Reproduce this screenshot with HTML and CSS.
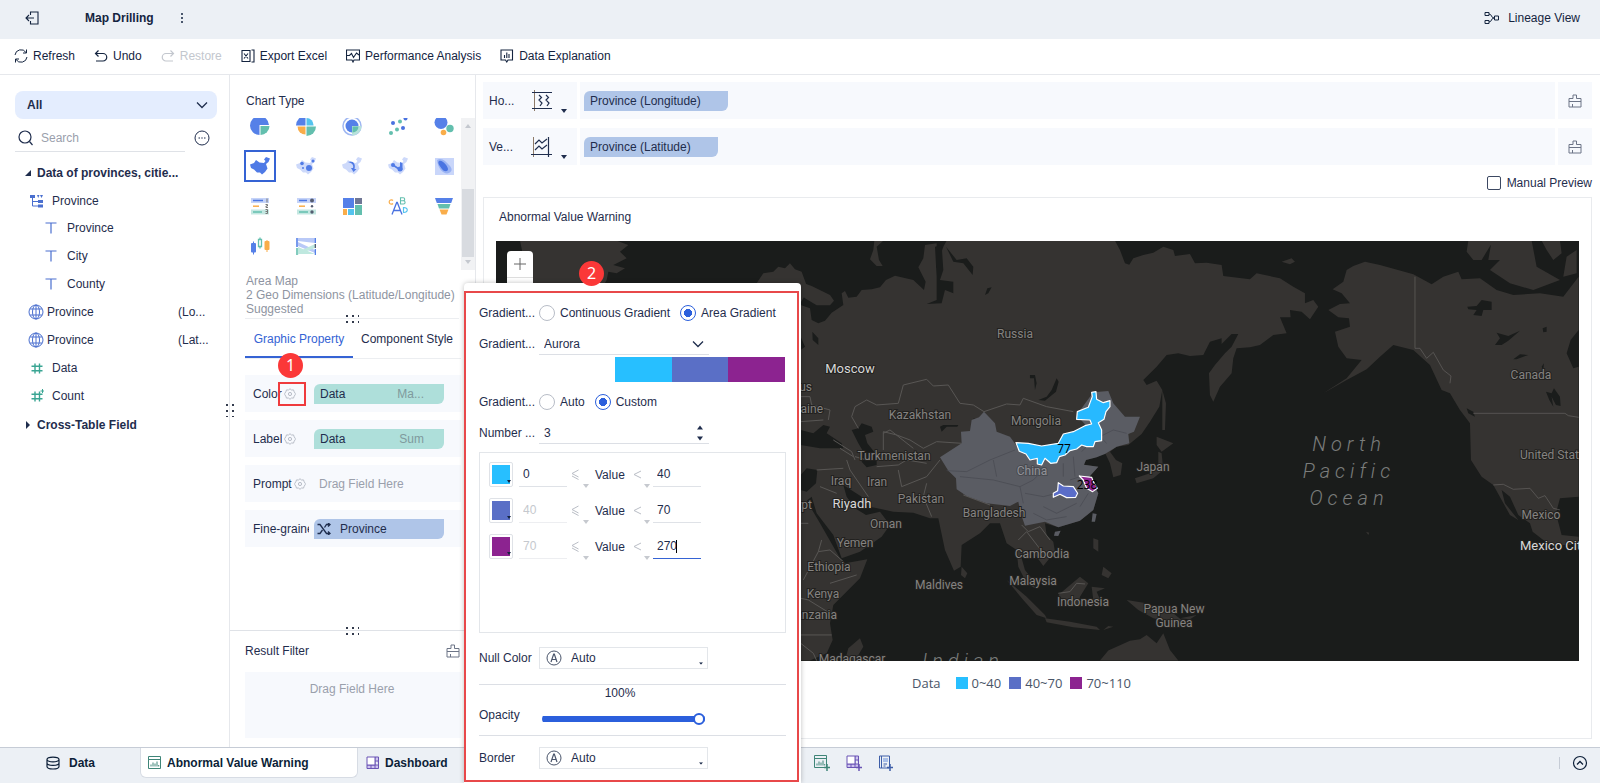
FILE: index.html
```
<!DOCTYPE html>
<html lang="en">
<head>
<meta charset="utf-8">
<title>Map Drilling</title>
<link rel="stylesheet" href="styles.css">
</head>
<body>
<svg class="defs" aria-hidden="true">
  <symbol id="gear" viewBox="0 0 12 12"><path d="M6 .700 7.500 2l2-.1.700 1.900L11.300 5.500v1L10.200 8.200l-.7 1.900-2-.1L6 11.300 4.500 10l-2 .1-.7-1.900L.700 6.500v-1l1.100-1.700.7-1.900 2 .1z" fill="none" stroke="currentColor"/><circle cx="6" cy="6" r="1.600" fill="none" stroke="currentColor"/></symbol>
  <symbol id="broom" viewBox="0 0 14 14"><path d="M5 4.500V1h3.500v3.500H13V13H1V4.500zM1 7.500h12M4.500 13v-3" fill="none" stroke="currentColor"/></symbol>
  <symbol id="china" viewBox="0 0 20 18"><path d="M0 7.500 4 6 6 3l3.500 2.500 4.500.5 1.500-2L14 2.500 16 0l4 1.500-1.500 3.500L16 7l1.500 4.500L15 15l-3 2.500-2-2H7L4 12.500 1 11z"/></symbol>
  <symbol id="globe" viewBox="0 0 16 16"><g fill="none" stroke="currentColor"><circle cx="8" cy="8" r="7"/><ellipse cx="8" cy="8" rx="3.500" ry="7"/><path d="M8 1v14M1.800 5h12.400M1.800 11h12.400"/></g></symbol>
  <symbol id="tee" viewBox="0 0 12 12"><path d="M.500 1h11M6 1v10.500" fill="none" stroke="currentColor" stroke-width="1.200"/></symbol>
  <symbol id="hash" viewBox="0 0 14 14"><path d="M5 2.500v10M9.500 2.500v10M1.500 5.200h11M1.500 9.700h11" fill="none" stroke="currentColor" stroke-width="1.400"/></symbol>
  <symbol id="chev" viewBox="0 0 12 8"><path d="M1 1.500 6 6.500l5-5" fill="none" stroke="currentColor" stroke-width="1.300"/></symbol>
  <symbol id="auto" viewBox="0 0 16 16"><g fill="none" stroke="currentColor"><circle cx="8" cy="8" r="7"/><path d="M5 12 7.700 4h.6L11 12M6 9.500h4" stroke-width="1.200"/></g></symbol>
  <symbol id="chart" viewBox="0 0 14 14"><path d="M.5.5h12v12H.500zM.500 3.500h12M3 8.500v2M5 6.500v4M7 7.500v3M9 5.500v5M10.700 9v1.500" fill="none" stroke="currentColor"/></symbol>
  <symbol id="dash" viewBox="0 0 14 14"><path d="M9 1h3.500v11.500H1V9h11.500M9 1v11.500M9 5h3.500" fill="#cfc4f0" stroke="currentColor"/><path d="M1 1h8v8H1z" fill="#fff" stroke="currentColor"/><path d="M5 9v3.500" stroke="currentColor"/></symbol>
  <symbol id="book" viewBox="0 0 14 14"><path d="M1.500 1h10v12h-10zM3.500 1v12" fill="none" stroke="currentColor"/><path d="M5 3h5v4H5z" fill="#a9bfe8"/><path d="M5.500 9H9M5.500 11h2" stroke="currentColor"/></symbol>
  <symbol id="tri" viewBox="0 0 6 4"><path d="M0 0h6L3 4z" fill="currentColor"/></symbol>
  <symbol id="lte" viewBox="0 0 8 12"><path d="M7.500 1 1 4.500 7.500 8M1 7l6.500 3.500" fill="none" stroke="currentColor"/></symbol>
  <symbol id="lt" viewBox="0 0 8 12"><path d="M8 2 1 5.500 8 9" fill="none" stroke="currentColor"/></symbol>
</svg>

<header class="top">
  <button class="back" aria-label="Exit"><svg width="15" height="14" viewBox="0 0 15 14"><path d="M5.500 4V1h7.500v12H5.500v-3M1 7h8M4 4 1 7l3 3" fill="none" stroke="currentColor" stroke-width="1.100"/></svg></button>
  <h1>Map Drilling</h1>
  <button class="more" aria-label="More"><svg width="4" height="12" viewBox="0 0 4 12" fill="currentColor"><circle cx="2" cy="2" r="1"/><circle cx="2" cy="6" r="1"/><circle cx="2" cy="10" r="1"/></svg></button>
  <button class="lineage"><svg width="16" height="14" viewBox="0 0 16 14"><path d="M1 1.500h4v3H1zM1 9.500h4v3H1zM5 3c3 0 2 4 5 4M5 11c3 0 2-4 5-4M10.500 5h4v4h-4z" fill="none" stroke="currentColor"/></svg>Lineage View</button>
</header>

<nav class="tools">
  <button><svg width="14" height="14" viewBox="0 0 14 14"><path d="M1 6a6 6 0 0 1 11-2.500M13 8a6 6 0 0 1-11 2.500M12.500.500v3.500H9M1.500 13.500V10H5" fill="none" stroke="currentColor"/></svg>Refresh</button>
  <button><svg width="14" height="14" viewBox="0 0 14 14"><path d="M4.500 1.500 1.500 4.500l3 3M1.500 4.500H9a3.500 3.500 0 0 1 0 7.500H2" fill="none" stroke="currentColor" stroke-width="1.200"/></svg>Undo</button>
  <button disabled><svg width="14" height="14" viewBox="0 0 14 14"><path d="M9.500 1.500l3 3-3 3M12.500 4.500H5A3.500 3.500 0 0 0 5 12h7" fill="none" stroke="currentColor" stroke-width="1.200"/></svg>Restore</button>
  <button><svg width="14" height="14" viewBox="0 0 14 14"><path d="M1 1.500h8v11H1zM10.500 1H13v12h-2.500M3 4.500l4 5M7 4.500l-4 5" fill="none" stroke="currentColor" stroke-width="1.100"/></svg>Export Excel</button>
  <button><svg width="14" height="14" viewBox="0 0 14 14"><path d="M.500 1h13v10H8l-1 2-1-2H.500zM1 6.500h2.500l2-2 2 4 3-4.500L13 6" fill="none" stroke="currentColor" stroke-width="1.100"/></svg>Performance Analysis</button>
  <button><svg width="14" height="14" viewBox="0 0 14 14"><path d="M1 1h11.500v10H8l-1.200 2L5.500 11H1zM4.500 9V6M6.800 9V3.500M9 9V5" fill="none" stroke="currentColor" stroke-width="1.100"/></svg>Data Explanation</button>
</nav>

<main class="work">
  <aside class="fields">
    <button class="all">All<svg width="12" height="8"><use href="#chev"/></svg></button>
    <div class="find">
      <label class="search"><svg width="16" height="16" viewBox="0 0 16 16"><circle cx="7" cy="7" r="6" fill="none" stroke="currentColor" stroke-width="1.200"/><path d="m11.500 11.500 3 3.500" stroke="currentColor" stroke-width="1.200"/></svg><input type="text" placeholder="Search" aria-label="Search"></label>
      <button aria-label="Options"><svg width="16" height="16" viewBox="0 0 16 16"><circle cx="8" cy="8" r="7" fill="none" stroke="currentColor"/><path d="M4.500 7.500H6v1H4.500zM7.300 7.500h1.400v1H7.300zM10 7.500h1.500v1H10z" fill="currentColor"/></svg></button>
    </div>
    <ul class="tree">
      <li class="group"><svg width="6" height="6" viewBox="0 0 6 6"><path d="M6 0v6H0z" fill="currentColor"/></svg>Data of provinces, citie...</li>
      <li><svg class="blue" width="14" height="14" viewBox="0 0 14 14"><path d="M0 1h5v3H0zM7 1h2.500L8.200 4zM10 1h3l-1.500 3zM8 6h5v3H8zM8 10.500h5v3H8z" fill="currentColor"/><path d="M2.500 4v8H8M2.500 7.500H8" fill="none" stroke="currentColor"/></svg>Province</li>
      <li class="deep"><svg class="blue" width="12" height="12"><use href="#tee"/></svg>Province</li>
      <li class="deep"><svg class="blue" width="12" height="12"><use href="#tee"/></svg>City</li>
      <li class="deep"><svg class="blue" width="12" height="12"><use href="#tee"/></svg>County</li>
      <li class="geo"><svg class="blue" width="16" height="16"><use href="#globe"/></svg>Province<span>(Lo...</span></li>
      <li class="geo"><svg class="blue" width="16" height="16"><use href="#globe"/></svg>Province<span>(Lat...</span></li>
      <li><svg class="teal" width="14" height="14"><use href="#hash"/></svg>Data</li>
      <li><svg class="teal" width="14" height="14"><use href="#hash"/><path d="M12.500 0v4M10.500 2h3.500" stroke="currentColor"/></svg>Count</li>
      <li class="group"><svg width="6" height="8" viewBox="0 0 6 8"><path d="M1 0l4 4-4 4z" fill="currentColor"/></svg>Cross-Table Field</li>
    </ul>
    <i class="grip side"></i>
  </aside>

  <section class="design">
    <h2>Chart Type</h2>
    <div class="types">
      <div class="grid">
        <button aria-label="Pie"><svg width="20" height="20" viewBox="0 0 20 20"><path d="M9.500 19A9.500 9.500 0 1 1 19 9H9.500z" fill="#5580e8"/><path d="M10.500 10H19.500A9 9 0 0 1 10.500 19z" fill="#63bfae"/></svg></button>
        <button aria-label="Rose"><svg width="20" height="20" viewBox="0 0 20 20"><path d="M9.500 9.500V0A9.500 9.500 0 0 0 0 9.500z" fill="#5580e8"/><path d="M10.500 9.500V2a7 7 0 0 1 7 7.500z" fill="#54c3ee"/><path d="M9.500 10.500v8a8 8 0 0 1-8-8z" fill="#f9ad4a"/><path d="M10.500 10.500H20a9.500 9.500 0 0 1-9.500 9.500z" fill="#63bfae"/></svg></button>
        <button aria-label="Ring"><svg width="20" height="20" viewBox="0 0 20 20"><circle cx="10" cy="10" r="9" fill="none" stroke="#9fb7f2" stroke-width="1.500"/><circle cx="10" cy="10" r="6.500" fill="#5580e8"/><path d="M10 10h9.500a9.500 9.500 0 0 1-9.500 9.500z" fill="#b7e2da"/><path d="M10.500 10.500h6a6 6 0 0 1-6 6z" fill="#63bfae"/></svg></button>
        <button aria-label="Scatter"><svg width="20" height="20" viewBox="0 0 20 20"><g fill="#63bfae"><circle cx="3" cy="17" r="2"/><circle cx="9" cy="13.500" r="2"/><circle cx="12" cy="5.500" r="2"/></g><g fill="#4a72e0"><circle cx="5" cy="7" r="2"/><circle cx="15" cy="12" r="2"/><circle cx="17.500" cy="2.500" r="2"/></g></svg></button>
        <button aria-label="Bubble"><svg width="20" height="20" viewBox="0 0 20 20"><circle cx="7" cy="6.500" r="6.500" fill="#5580e8"/><circle cx="16" cy="12.500" r="3.700" fill="#63bfae"/><circle cx="9.500" cy="16.500" r="2.800" fill="#f9ad4a"/></svg></button>
        <button class="on" aria-label="Area Map"><svg width="20" height="18" fill="#4f7ae6"><use href="#china"/></svg></button>
        <button aria-label="Point Map"><svg width="20" height="18"><use href="#china" fill="#cdd9fa"/><g fill="#4f7ae6"><circle cx="6" cy="6.500" r="1.800"/><circle cx="13" cy="11" r="3"/><circle cx="17" cy="4" r="1.500"/><circle cx="7" cy="11" r="1"/></g></svg></button>
        <button aria-label="Flow Map"><svg width="20" height="18"><use href="#china" fill="#cdd9fa"/><path d="M6 5c5-2 8 2 6.500 7l2 0-3 3-2.500-4h2c1-3-1-5-5-6z" fill="#4f7ae6"/></svg></button>
        <button aria-label="Heat Map"><svg width="20" height="18"><use href="#china" fill="#cdd9fa"/><g fill="#4f7ae6"><circle cx="5" cy="8" r="2"/><circle cx="12" cy="12" r="2.500"/><path d="m5 7 6 4-1 1.500-5-3.500zM12 5l2.500 1v7H12z"/></g></svg></button>
        <button aria-label="Contour Map"><svg width="20" height="18" viewBox="0 0 20 18"><path d="M1 1h19v17H1z" fill="#c9d6fa"/><path d="M3 3c5-3 9 2 12 5s4 6 0 8S4 13 3 3z" fill="#9ab3f3"/><path d="M5 4c3-2 9 5 9 8s-4 3-6 0-5-6-3-8z" fill="#4a74e2"/></svg></button>
        <button aria-label="Group Table"><svg width="20" height="18" viewBox="0 0 20 18"><path d="M1 1h18v5H1z" fill="#c5d3f8"/><path d="M1 12.500h18v5H1z" fill="#c4e7e1"/><path d="M3 3.500h10" stroke="#4a74e2" stroke-width="1.500"/><path d="M3 9.200h6" stroke="#f9ad4a" stroke-width="1.500"/><path d="M3 15h9" stroke="#63bfae" stroke-width="1.500"/><path d="M17 1.500v4M15.500 7.500h2v1.500h-1.500v1.500h2M15.500 12.500h2v4h-2m0-2h2" fill="none" stroke="#777"/></svg></button>
        <button aria-label="KPI Card"><svg width="20" height="18" viewBox="0 0 20 18"><path d="M1 1h19v5H1z" fill="#c5d3f8"/><path d="M1 12.500h19v5H1z" fill="#c4e7e1"/><path d="M3 3.500h8" stroke="#4a74e2" stroke-width="1.500"/><path d="M3 9.200h6" stroke="#f9ad4a" stroke-width="1.500"/><path d="M3 15h9" stroke="#63bfae" stroke-width="1.500"/><g fill="#555c70"><circle cx="16" cy="3.500" r="2"/><circle cx="16" cy="9.200" r="1.200"/><circle cx="16" cy="15" r="1.700"/></g></svg></button>
        <button aria-label="Treemap"><svg width="20" height="18" viewBox="0 0 20 18"><path d="M1 1h11v10H1z" fill="#5580e8"/><path d="M13 1h7v6h-7z" fill="#6f7694"/><path d="M13 8h7v10h-7z" fill="#63bfae"/><path d="M1 12h4v6H1z" fill="#f9ad4a"/><path d="M6 12h6v6H6z" fill="#54c3ee"/></svg></button>
        <button aria-label="Word Cloud"><svg width="20" height="18" viewBox="0 0 20 18" fill="none"><path d="M4 17.500 8.700 5.500h.6L14 17.500M5.500 13.500h7" stroke="#4a72e0" stroke-width="1.300"/><path d="M5 3.500a2.200 2.200 0 1 0 0 3" stroke="#f9ad4a" stroke-width="1.200"/><path d="M12.500.800V7h3a1.500 1.500 0 0 0 0-3.200h-3 2.700a1.500 1.500 0 0 0 0-3z" stroke="#63bfae" stroke-width="1.100"/><path d="M15.500 10.500v5c5 .3 5-5.300 0-5z" stroke="#54c3ee" stroke-width="1.200"/></svg></button>
        <button aria-label="Funnel"><svg width="20" height="18" viewBox="0 0 20 18"><path d="M1 1h18l-1.800 5H2.800z" fill="#5580e8"/><path d="M3.500 7h13l-1.500 4.500H5z" fill="#63bfae"/><path d="M5.500 12.500h9l-2 5h-5z" fill="#f9ad4a"/></svg></button>
        <button aria-label="Box Plot"><svg width="20" height="18" viewBox="0 0 20 18"><rect x="1" y="6" width="5" height="9.500" rx="1" fill="#5580e8"/><path d="M3.500 4.500v13" stroke="#5580e8"/><path d="M8.500 2.500h3v7h-3zM10 .5v2M10 9.500v2" fill="none" stroke="#63bfae" stroke-width="1.300"/><rect x="14.500" y="4" width="5" height="9" rx="1" fill="#f9ad4a"/><path d="M17 3v12" stroke="#f9ad4a"/></svg></button>
        <button aria-label="Sankey"><svg width="20" height="18" viewBox="0 0 20 18"><path d="M2 1h17v5L2 4zM2 5l17 8v3L2 9z" fill="#b9c9f7"/><path d="M2 15l17-8v4L2 17.500zM2 10l17 7H2z" fill="#bfe8df"/><path d="M1 1v9M19.500 1v5M19.500 12v6" stroke="#5580e8" stroke-width="1.600"/><path d="M1 11v7" stroke="#63bfae" stroke-width="1.600"/><path d="M19.500 7v4" stroke="#555c70" stroke-width="1.600"/></svg></button>
      </div>
      <div class="bar"><svg width="6" height="4"><path d="M0 4h6L3 0z" fill="#c4c8cf"/></svg><i></i><svg width="6" height="4"><path d="M0 0h6L3 4z" fill="#c4c8cf"/></svg></div>
    </div>
    <p class="hint">Area Map<br>2 Geo Dimensions (Latitude/Longitude)<br>Suggested</p>
    <div class="split"><i class="grip"></i></div>
    <div class="tabs"><button class="on">Graphic Property</button><button>Component Style</button></div>
    <div class="props">
      <div class="prop"><span>Color</span><svg width="12" height="12"><use href="#gear"/></svg><i class="mark"></i><b class="badge one">1</b><div class="chip green">Data<em>Ma...</em></div></div>
      <div class="prop"><span>Label</span><svg width="12" height="12"><use href="#gear"/></svg><div class="chip green">Data<em>Sum</em></div></div>
      <div class="prop"><span>Prompt</span><svg width="12" height="12"><use href="#gear"/></svg><div class="drop">Drag Field Here</div></div>
      <div class="prop"><span>Fine-grained</span><div class="chip"><svg width="14" height="12" viewBox="0 0 14 12"><path d="M.5 1.500H3l6.500 9H13M.500 10.500H3l2.500-3.500M7.500 4.500l2-3H13M11 0l2 1.500L11 3.500M11 8.500l2 2-2 1.500" fill="none" stroke="currentColor" stroke-width="1.300"/></svg>Province</div></div>
    </div>
    <div class="split wide"><i class="grip"></i></div>
    <div class="filter">
      <div class="fhead">Result Filter<button aria-label="Clear filter"><svg width="14" height="14"><use href="#broom"/></svg></button></div>
      <div class="fdrop">Drag Field Here</div>
    </div>
  </section>

  <section class="canvas">
    <div class="shelf">
      <div class="axis">Ho...<svg width="22" height="22" viewBox="0 0 22 22"><path d="M3.500 0v21" stroke="#8d7a68"/><path d="M1 2.500h20M1 18.500h20M8 5l2.500 2.500L8 10l3 3-2 3M15 5l2.500 2.500L15 10l3 3-2 3" fill="none" stroke="currentColor" stroke-width="1.200"/></svg><svg class="down" width="6" height="4"><use href="#tri"/></svg></div>
      <div class="slot"><div class="chip">Province (Longitude)</div></div>
      <button aria-label="Clear horizontal axis"><svg width="14" height="14"><use href="#broom"/></svg></button>
    </div>
    <div class="shelf">
      <div class="axis">Ve...<svg width="22" height="22" viewBox="0 0 22 22"><path d="M3.500 1v20" stroke="#8d7a68"/><path d="M1 18.500h21M18.500 1v20M5 8l4-4 3 3 5-4M5 14l4-4 3 3 5-4" fill="none" stroke="currentColor" stroke-width="1.200"/></svg><svg class="down" width="6" height="4"><use href="#tri"/></svg></div>
      <div class="slot"><div class="chip">Province (Latitude)</div></div>
      <button aria-label="Clear vertical axis"><svg width="14" height="14"><use href="#broom"/></svg></button>
    </div>
    <label class="preview"><input type="checkbox">Manual Preview</label>
    <div class="card">
      <h2>Abnormal Value Warning</h2>
      <div class="map">
        <svg class="world" viewBox="496 241 1083 420" preserveAspectRatio="xMidYMid slice" role="img" aria-label="World map">
          <g fill="#353331">
            <g transform="translate(480 70) scale(.3333)">
              <path d="M120 512 130 560 145 580 150 900 200 850 260 800 330 720 380 630 385 605 410 610 435 595 400 585 440 565 420 545 445 525 410 512zM830 640 850 610 880 605 895 590 915 595 930 580 945 598 965 605 985 660 900 800 830 760z"/>
            </g>
            <g transform="translate(780 230) scale(.3333)">
              <path d="M283 32 310 32 290 50 297 90 308 108 290 108 270 88 280 60zM60 155 95 168 150 195 162 212 150 226 110 226 75 205 60 190z"/>
              <path d="M0 200 62 225 90 235 95 270 115 280 135 272 155 248 190 225 185 190 195 183 205 203 230 200 245 180 275 178 300 172 318 150 345 137 400 150 432 180 437 155 415 112 430 85 435 45 470 40 470 75 468 110 480 130 480 80 490 50 500 32H1005L1020 60 1035 100 1048 104 1060 85 1090 75 1120 68 1150 50 1180 60 1185 78 1230 72 1245 100 1280 98 1325 105 1330 138 1410 148 1430 130 1500 145 1540 170 1575 190 1575 220 1600 210 1615 230 1590 268 1565 245 1530 240 1532 262 1500 262 1520 310 1480 315 1440 345 1410 352 1370 355 1360 385 1355 430 1320 470 1300 515 1290 495 1287 430 1305 405 1335 370 1355 350 1375 312 1355 312 1325 342 1325 325 1290 335 1270 375 1230 378 1195 370 1160 375 1130 410 1090 450 1100 465 1130 452 1147 480 1138 530 1110 575 1085 612 1045 645 1010 650 990 665 1008 690 1027 700 1022 735 1000 742 990 700 975 668 950 682 918 690 912 704 955 710 928 740 955 790 940 840 900 872 835 892 795 880 800 915 820 935 825 965 790 1008 770 980 745 960 725 985 735 1020 755 1045 765 1075 740 1060 715 1010 710 960 680 940 660 880 630 880 600 910 545 945 542 1010 522 1022 495 960 475 865 450 865 400 848 340 845 270 830 245 800 190 765 200 800 225 835 258 855 300 845 330 885 305 920 240 965 185 985 160 915 110 850 95 800 80 812 120 880 180 985 195 1000 262 988 240 1045 160 1125 150 1180 158 1230 140 1270 90 1292H0z"/>
              <path d="M240 1225 250 1250 225 1292 195 1292 205 1255zM545 1010 562 1030 555 1045 543 1035zM680 1050 740 1100 795 1155 800 1165 770 1155 730 1110zM795 1165 870 1175 950 1190 960 1200 880 1192 800 1177zM835 1095 900 1040 925 1060 900 1100 895 1125 860 1120zM935 1070 975 1075 950 1085 965 1120 940 1110zM1040 1110 1100 1120 1180 1150 1235 1195 1190 1180 1120 1165 1075 1140zM940 925 955 930 955 965 940 955zM970 1010 995 1030 985 1045 965 1035zM960 1292 985 1262 1050 1232 1080 1228 1100 1215 1130 1240 1150 1210 1170 1260 1195 1292zM1065 745 1110 730 1135 715 1135 665 1145 670 1150 720 1120 745 1070 760zM1130 620 1180 640 1145 665 1130 645zM1147 480 1158 520 1155 600 1147 600zM1000 1190 970 1200 985 1188z"/>
              <path d="M1505 95 1535 85 1545 95 1530 103z"/>
            </g>
            <g transform="translate(1180 230) scale(.3333)">
              <path d="M500 120 520 108 555 95 600 105 700 133 755 163 790 140 835 125 845 148 900 145 950 180 1000 195 1080 190 1150 200 1196 140V300L1172 330 1160 370 1180 415 1196 410V800L1140 805 1128 850 1145 915 1196 920V945H1120L1090 930 1058 905 1050 880 1015 855 990 800 965 780 975 820 1015 870 990 855 940 765 905 740 873 690 870 580 840 540 810 490 785 480 750 405 700 360 640 345 600 380 560 418 500 450 430 490 500 445 545 390 500 385 475 350 465 305 510 290 507 265 475 262 445 240 480 222 510 220 485 190 458 178 490 155zM865 32H940L905 90 880 90 860 65zM935 32H1055L1070 110 1140 150 1060 180 990 160 930 120 960 90 925 90zM1085 32 1140 32 1145 70 1120 90 1100 60zM1160 80 1190 60V130L1150 140z"/>
              <path d="M558 905 568 908 565 915zM0 1165 50 1155 30 1168z"/>
            </g>
          </g>
          <g transform="translate(780 230) scale(.3333)" fill="#1a1c1b">
            <path d="M62 600 100 610 130 585 150 590 140 610 185 640 190 655 120 655 62 645zM62 735 80 715 112 720 108 760 80 785 62 780zM215 600 235 595 245 580 275 590 280 605 255 615 262 640 290 675 290 705 260 712 245 695 250 665 235 640zM775 510 800 500 815 480 830 445 836 455 828 485 795 512zM480 590 490 585 535 585 532 590 500 590 485 605zM750 435 765 435 770 460 765 480 762 445 750 445zM578 565 600 570 595 575zM615 195 622 175 635 172 625 190zM97 305 115 325 115 345 98 330zM465 50 485 45 490 120 480 150 520 155 520 190 495 180 485 220 440 222 470 210 470 140zM498 50 530 90 560 85 580 110 578 135 550 100 520 95zM62 320 75 350 62 360z"/>
          </g>
          <g transform="translate(1180 230) scale(.3333)" fill="#1a1c1b">
            <path d="M862 230 890 228 905 210 935 215 935 240 910 240 905 258 880 255 890 240 865 238zM945 345 960 325 950 308 985 318 1020 302 985 332 965 345zM1000 388 1020 373 1045 375 1010 388zM1088 295 1100 290 1100 305 1090 307zM1085 410 1092 400 1090 420zM1098 485 1115 490 1122 475 1140 500 1142 528 1128 525 1115 500 1120 530 1108 510zM860 535 880 545 885 560 865 550z"/>
          </g>
          <g transform="translate(780 230) scale(.3333)" fill="none" stroke="#585654" stroke-width="3" stroke-linejoin="round">
            <path d="M215 560 225 530 260 510 290 525 355 520 370 465 440 448 460 468 505 465 540 520 580 525 612 545M215 560 235 595M612 545 680 522 720 525 730 505 800 530 880 545M310 660 310 605 350 615 390 630 430 655 470 635 545 640M310 610 330 600 400 655M355 720 365 770 440 740 480 690M225 680 260 690M290 710 355 705 380 690 440 700M440 760 430 800 455 860M200 690 210 720 265 800M110 720 190 715M120 770 170 790M62 500 90 500 95 525 150 540 145 570M62 575 130 570M160 630 215 665 225 690M180 655 220 680M62 880 85 880M125 930 115 965 150 960 190 995M115 965 70 1050M150 1060 230 1035M62 1105 85 1110 150 1150M62 1215 155 1215M725 885 745 905 780 890 810 930M715 930 740 905 790 970M62 1240 100 1270 110 1292M835 1090 870 1085 890 1060 915 1062M550 795 630 825M630 860 640 840 670 850"/>
          </g>
          <g transform="translate(1180 230) scale(.3333)" fill="none" stroke="#666462" stroke-width="2"><path d="M705 140V355H720L740 385 760 367 790 420 813 438 810 460M880 550H1155L1165 557 1196 562M940 765 970 763 1000 778 1050 775 1075 805 1095 797 1120 835 1140 840"/></g>
          <g transform="translate(780 230) scale(.3333)">
            <path d="M612 545 645 580 650 605 690 620 712 650 835 660 930 600 890 555 940 487 985 483 1000 520 1035 560 1080 560 1062 605 1045 612 1048 640 1010 650 975 672 950 682 918 690 912 704 955 710 928 740 955 790 940 840 900 872 835 892 795 875 735 887 722 850 715 815 690 828 620 820 560 798 530 778 528 745 505 722 480 682 545 640 543 605 570 603 575 570 597 562zM938 850 950 852 945 875 935 875zM825 905 842 902 835 918 822 917z" fill="#5a5c63"/>
            <path d="M500 722 560 725 630 690 705 660M540 740 640 750 720 770 760 750 790 720M640 690 650 740M720 770 730 820M735 790 790 800 830 790M790 830 830 850 890 820M850 700 850 740M880 680 885 740M905 665 940 630 1000 600 1040 610M950 610 980 640M760 850 800 870 860 860M900 740 870 750M925 790 900 830" fill="none" stroke="#474950" stroke-width="2"/>
          </g>
          <g class="place">
            <text x="1015" y="338" text-anchor="middle">Russia</text>
            <text x="920" y="419" text-anchor="middle">Kazakhstan</text>
            <text x="1036" y="425" text-anchor="middle">Mongolia</text>
            <text x="894" y="460" text-anchor="middle">Turkmenistan</text>
            <text x="841" y="485" text-anchor="middle">Iraq</text>
            <text x="877" y="486" text-anchor="middle">Iran</text>
            <text x="921" y="503" text-anchor="middle">Pakistan</text>
            <text x="886" y="528" text-anchor="middle">Oman</text>
            <text x="855" y="547" text-anchor="middle">Yemen</text>
            <text x="829" y="571" text-anchor="middle">Ethiopia</text>
            <text x="823" y="598" text-anchor="middle">Kenya</text>
            <text x="837" y="619" text-anchor="end">Tanzania</text>
            <text x="852" y="663" text-anchor="middle">Madagascar</text>
            <text x="812" y="391" text-anchor="end">Belarus</text>
            <text x="823" y="413" text-anchor="end">Ukraine</text>
            <text x="812" y="509" text-anchor="end">Egypt</text>
            <text x="1153" y="471" text-anchor="middle">Japan</text>
            <text x="994" y="517" text-anchor="middle">Bangladesh</text>
            <text x="1042" y="558" text-anchor="middle">Cambodia</text>
            <text x="939" y="589" text-anchor="middle">Maldives</text>
            <text x="1033" y="585" text-anchor="middle">Malaysia</text>
            <text x="1083" y="606" text-anchor="middle">Indonesia</text>
            <text x="1174" y="613" text-anchor="middle">Papua New</text>
            <text x="1174" y="627" text-anchor="middle">Guinea</text>
            <text x="1531" y="379" text-anchor="middle">Canada</text>
            <text x="1520" y="459">United States</text>
            <text x="1541" y="519" text-anchor="middle">Mexico</text>
            <text class="inner" x="1032" y="475" text-anchor="middle">China</text>
            <text class="city" x="850" y="373" text-anchor="middle">Moscow</text>
            <text class="city" x="852" y="508" text-anchor="middle">Riyadh</text>
            <text class="city" x="1520" y="550">Mexico City</text>
          </g>
          <g class="ocean">
            <text x="1349" y="451" text-anchor="middle">North</text>
            <text x="1349" y="478" text-anchor="middle">Pacific</text>
            <text x="1349" y="505" text-anchor="middle">Ocean</text>
            <text x="963" y="668" text-anchor="middle">Indian</text>
          </g>
          <g transform="translate(780 230) scale(.3333)" stroke="#fff" stroke-width="3.500" stroke-linejoin="round">
            <path d="M708 638 745 640 785 648 835 640 850 612 880 605 915 587 935 582 930 570 890 568 892 545 925 532 937 500 935 487 948 485 950 508 970 518 990 512 990 530 978 545 972 568 955 578 965 600 965 632 945 635 940 650 920 650 905 645 890 657 870 662 855 675 838 680 830 698 812 700 795 685 785 705 772 702 772 685 750 690 738 672 718 664z" fill="#27b9ff"/>
            <path d="M835 758 850 768 880 770 893 790 887 802 860 803 840 793 820 802 820 790 833 782z" fill="#5a6dc8"/>
            <path d="M898 738 935 742 940 755 952 775 938 785 920 775 910 750z" fill="#8c2390"/>
          </g>
          <g class="value"><text x="1064" y="453" text-anchor="middle">77</text><text x="1087" y="489" text-anchor="middle">238</text></g>
        </svg>
        <button class="zoomin" aria-label="Zoom in"><svg width="12" height="12"><path d="M0 6h12M6 0v12" stroke="#666"/></svg></button>
      </div>
      <div class="legend">Data<span class="key c1"></span>0~40<span class="key c2"></span>40~70<span class="key c3"></span>70~110</div>
    </div>
  </section>
</main>

<footer class="sheets">
  <button class="data"><svg width="14" height="14" viewBox="0 0 14 14"><path d="M1 3.500C1 .3 13 .3 13 3.500S1 6.700 1 3.500v7c0 3.300 12 3.300 12 0v-7M1 7c0 3.200 12 3.200 12 0" fill="none" stroke="currentColor" stroke-width="1.200"/></svg>Data</button>
  <button class="tab"><svg class="jade" width="14" height="14"><use href="#chart"/></svg>Abnormal Value Warning</button>
  <button class="board"><svg class="violet" width="14" height="14"><use href="#dash"/></svg>Dashboard</button>
  <div class="adders">
    <button aria-label="Add component"><svg class="jade" width="16" height="16"><use href="#chart" width="14" height="14"/><path d="M13 9v7M10 12.500h6" stroke="currentColor" stroke-width="1.500"/></svg></button>
    <button aria-label="Add dashboard"><svg class="violet" width="16" height="16"><use href="#dash" width="14" height="14"/><path d="M13 9v7M10 12.500h6" stroke="currentColor" stroke-width="1.500"/></svg></button>
    <button aria-label="Add document"><svg class="navy" width="16" height="16"><use href="#book" width="14" height="14"/><path d="M12 9v7M9 12.500h6" stroke="currentColor" stroke-width="1.500"/></svg></button>
  </div>
  <button class="fold" aria-label="Collapse"><svg width="16" height="16" viewBox="0 0 16 16"><circle cx="8" cy="8" r="6.500" fill="none" stroke="currentColor" stroke-width="1.200"/><path d="m5 9.500 3-3 3 3" fill="none" stroke="currentColor" stroke-width="1.300"/></svg></button>
</footer>

<form class="pop">
  <div class="row"><span class="name">Gradient...</span><label class="opt"><input type="radio" name="kind">Continuous Gradient</label><label class="opt"><input type="radio" name="kind" checked>Area Gradient</label></div>
  <div class="row scheme"><label class="name" for="scheme">Gradient...</label><div class="pick line"><select id="scheme"><option>Aurora</option></select><svg width="12" height="8"><use href="#chev"/></svg></div></div>
  <div class="ramp"><i class="c1"></i><i class="c2"></i><i class="c3"></i></div>
  <div class="row"><span class="name">Gradient...</span><label class="opt"><input type="radio" name="range">Auto</label><label class="opt"><input type="radio" name="range" checked>Custom</label></div>
  <div class="row count"><label class="name" for="num">Number ...</label><div class="pick line"><input id="num" type="text" value="3"><svg width="8" height="16" viewBox="0 0 8 16"><path d="M1 4.500h6L4 .5zM1 11.500h6l-3 4z" fill="currentColor"/></svg></div></div>
  <div class="ranges">
    <div class="range"><button type="button" class="swatch c1" aria-label="Colour 1"></button><input type="text" value="0" aria-label="From 1"><span class="op"><svg width="8" height="12"><use href="#lte"/></svg></span><span>Value</span><span class="op lt"><svg width="8" height="12"><use href="#lt"/></svg></span><input type="text" value="40" aria-label="To 1"></div>
    <div class="range"><button type="button" class="swatch c2" aria-label="Colour 2"></button><input type="text" value="40" disabled aria-label="From 2"><span class="op"><svg width="8" height="12"><use href="#lte"/></svg></span><span>Value</span><span class="op lt"><svg width="8" height="12"><use href="#lt"/></svg></span><input type="text" value="70" aria-label="To 2"></div>
    <div class="range"><button type="button" class="swatch c3" aria-label="Colour 3"></button><input type="text" value="70" disabled aria-label="From 3"><span class="op"><svg width="8" height="12"><use href="#lte"/></svg></span><span>Value</span><span class="op lt"><svg width="8" height="12"><use href="#lt"/></svg></span><span class="active"><input type="text" value="270" aria-label="To 3"><i class="caret"></i></span></div>
  </div>
  <div class="row nullc"><label class="name" for="nullc">Null Color</label><div class="pick box"><svg width="16" height="16"><use href="#auto"/></svg><select id="nullc"><option>Auto</option></select><svg class="down" width="4" height="3" viewBox="0 0 6 4"><use href="#tri"/></svg></div></div>
  <div class="opacity"><output for="op">100%</output><div class="row"><label class="name" for="op">Opacity</label><input id="op" type="range" min="0" max="100" value="100"></div></div>
  <div class="row"><label class="name" for="border">Border</label><div class="pick box"><svg width="16" height="16"><use href="#auto"/></svg><select id="border"><option>Auto</option></select><svg class="down" width="4" height="3" viewBox="0 0 6 4"><use href="#tri"/></svg></div></div>
  <i class="frame"></i>
</form>
<b class="badge two">2</b>
</body>
</html>
```

FILE: styles.css
```
* { box-sizing: border-box; }
html, body { height: 100%; }
body {
  margin: 0;
  display: flex;
  flex-direction: column;
  position: relative;
  overflow: hidden;
  background: #fff;
  color: #1f2d4d;
  font: 12px/16px "Liberation Sans", Arial, sans-serif;
}
button, input, select { font: inherit; color: inherit; border: 0; padding: 0; margin: 0; background: none; outline: 0; }
button { display: flex; align-items: center; }
h1, h2, p, ul { margin: 0; padding: 0; font-size: 12px; font-weight: 400; list-style: none; }
svg { flex: none; display: block; }
.defs { position: absolute; width: 0; height: 0; }

.top { height: 39px; background: #ecf0f5; display: flex; align-items: center; padding-bottom: 4px; color: #14243f; }
.back { width: 65px; height: 39px; justify-content: center; }
.top h1 { font-weight: 700; padding-left: 20px; }
.more { margin-left: 26px; }
.lineage { margin-left: auto; margin-right: 20px; gap: 8px; }

.tools { height: 36px; border-bottom: 1px solid #e6e8ec; display: flex; gap: 19px; padding: 0 0 2px 14px; color: #14243f; }
.tools button { gap: 5px; }
.tools button:disabled { color: #c3c7ce; }

.work { flex: 1; min-height: 0; display: flex; }
.fields { width: 230px; border-right: 1px solid #e6e8ec; padding: 16px 12px 0 15px; position: relative; }
.all { width: 100%; height: 28px; border-radius: 8px; background: #e4edfe; font-weight: 700; justify-content: space-between; padding: 0 9px 0 12px; }
.find { display: flex; justify-content: space-between; align-items: center; padding-right: 7px; height: 38px; }
.search { width: 170px; height: 28px; border-bottom: 1px solid #dfe2e7; display: flex; align-items: center; gap: 7px; padding: 0 3px; }
.search input { width: 120px; }
.search input::placeholder { color: #9aa0ac; opacity: 1; }
.tree { padding-top: 1px; margin-left: -1px; }
.tree li { height: 28px; display: flex; align-items: center; padding-left: 16px; gap: 8px; }
.tree .group { font-weight: 700; padding-left: 11px; height: 30px; gap: 6px; }
.tree .deep { padding-left: 31px; gap: 10px; }
.tree .geo { padding-left: 14px; gap: 3px; }
.geo span { margin-left: auto; width: 39px; }
.tree li:nth-child(2) { height: 26px; }
.blue { color: #4a6fcf; }
.teal { color: #3aa593; }
.grip { width: 14px; height: 9px; background: radial-gradient(circle, #333b4d 1px, transparent 1px) -1px -1px / 6px 6px; }
.grip.side { position: absolute; right: -5px; top: 328px; width: 9px; height: 14px; }

.design { width: 246px; border-right: 1px solid #e6e8ec; padding: 16px 0 0 15px; display: flex; flex-direction: column; }
.design h2 { padding: 2px 0 0 1px; }
.types { display: flex; height: 152px; margin: 9px 0 0 -2px; justify-content: space-between; overflow: hidden; }
.grid { display: grid; grid-template-columns: repeat(5, 46px); grid-auto-rows: 40px; margin-top: -12px; margin-left: -6px; justify-items: center; align-items: center; width: 222px; }
.grid button { width: 32px; height: 32px; justify-content: center; }
.grid .on { border: 2px solid #3563d4; }
.bar { width: 14px; background: #f1f2f4; display: flex; flex-direction: column; align-items: center; padding: 6px 0; justify-content: space-between; }
.bar i { width: 12px; height: 68px; background: #d8dbe0; margin-top: 57px; }
.hint { color: #8e94a1; line-height: 14px; padding: 4px 0 0 1px; white-space: nowrap; }
.split { height: 1px; background: #eceef1; margin-right: 16px; margin-top: 2px; display: flex; align-items: center; justify-content: center; }
.split.wide { margin: auto 0 0 -15px; background: #dfe2e7; }
.split.wide .grip { margin-left: -2px; }
.tabs { display: flex; margin: 0 14px 0 0; height: 40px; border-bottom: 1px solid #eceef1; color: #1f2d4d; }
.tabs button { justify-content: center; width: 108px; white-space: nowrap; }
.tabs .on { color: #3563d4; border-bottom: 2px solid #3563d4; padding-top: 2px; }
.props { display: grid; gap: 8px; margin: 16px 14px 0 0; }
.prop { height: 37px; background: #f7f9fd; display: flex; align-items: center; padding-left: 8px; gap: 2px; position: relative; }
.prop > svg { color: #b9bec8; }
.prop span { white-space: nowrap; overflow: hidden; max-width: 56px; }
.chip { height: 20px; background: #afc5e8; border-radius: 6px 0 6px 0; display: flex; align-items: center; padding: 0 6px; }
.chip.green { background: #aedfda; }
.prop .chip { width: 130px; margin: 0 17px 0 auto; padding: 0 20px 0 6px; }
.prop .chip svg { margin: 0 9px 0 -3px; }
.chip em { font-style: normal; margin-left: auto; color: #7f9a9d; }
.drop { color: #9aa0ac; width: 142px; margin-left: auto; }
.mark { position: absolute; left: 33px; top: 7px; width: 28px; height: 24px; border: 2px solid #ef3b3d; }
.badge { position: absolute; width: 25px; height: 25px; border-radius: 50%; background: #fb3838; color: #fff; font: 400 16px/25px "Noto Sans", sans-serif; text-align: center; z-index: 5; }
.badge.one { left: 33px; top: -22px; }
.badge.two { left: 579px; top: 261px; }
.filter { padding: 12px 14px 9px 0; }
.fhead { display: flex; justify-content: space-between; align-items: center; color: #1f2d4d; padding-right: 1px; }
.fhead button, .shelf button { color: #6d7587; }
.fdrop { margin-top: 13px; height: 66px; background: #f7f9fd; text-align: center; padding: 9px 2px 0 0; color: #9aa0ac; }

.canvas { flex: 1; min-width: 0; padding: 7px 8px 8px 7px; display: flex; flex-direction: column; }
.shelf { height: 37px; margin-bottom: 9px; display: flex; gap: 3px; }
.shelf > * { background: #f7f9fd; }
.axis { width: 94px; display: flex; align-items: center; padding-left: 6px; position: relative; }
.axis > svg:first-of-type { margin-left: 17px; }
.axis .down { position: absolute; right: 10px; bottom: 6px; }
.slot { flex: 1; display: flex; align-items: center; padding-left: 4px; }
.slot .chip { padding-right: 27px; }
.shelf > button { width: 34px; justify-content: center; }
.preview { display: flex; align-items: center; justify-content: flex-end; gap: 6px; height: 18px; }
.preview input { appearance: none; width: 14px; height: 14px; border: 1px solid #3c4862; border-radius: 2px; }
.card { flex: 1; min-height: 0; margin-top: 5px; border: 1px solid #e9ebee; padding: 0 12px; display: flex; flex-direction: column; }
.card h2 { padding: 11px 3px 16px; }
.map { flex: 1; min-height: 0; position: relative; background: #1a1c1b; }
.world { width: 100%; height: 100%; }
.zoomin { position: absolute; left: 11px; top: 10px; width: 26px; height: 53px; background: linear-gradient(#fff 26px, #ddd 26px, #ddd 27px, #fff 27px); border-radius: 4px; align-items: flex-start; justify-content: center; padding-top: 7px; }
.place { font: 12px Roboto, sans-serif; fill: #858381; stroke: #22211f; stroke-width: 2px; paint-order: stroke; }
.place .city { font-size: 13px; fill: #d8d8d8; }
.place .inner { stroke: #484a50; fill: #929399; }
.ocean { font: italic 300 20px Roboto, sans-serif; letter-spacing: 5px; fill: #7b7c7b; }
.value { font: 12px "Open Sans", sans-serif; fill: #000; }
.legend { height: 77px; display: flex; justify-content: center; padding: 14px 32px 0 0; font: 13px/16px "Open Sans", sans-serif; color: #4a5568; }
.key { width: 12px; height: 12px; margin: 2px 4px 0 8px; }
.key:first-of-type { margin-left: 15px; }
.c1 { background: #27bfff; }
.c2 { background: #5a6fc6; }
.c3 { background: #8c2390; }

.sheets { height: 36px; background: #ecf0f5; border-top: 1px solid #c6ccd6; display: flex; font-weight: 700; color: #0c1f38; padding: 0 12px 5px 46px; }
.sheets button { gap: 5px; }
.sheets .data { gap: 9px; width: 94px; }
.sheets .tab { width: 218px; background: #fff; border: 1px solid #d7dce4; border-top: 0; border-radius: 0 0 6px 6px; padding-left: 7px; }
.sheets .board { padding-left: 8px; }
.jade { color: #3f8578; }
.violet { color: #6a54b5; }
.navy { color: #3e5ea8; }
.adders { display: flex; gap: 16px; margin-left: 366px; }
.fold { margin-left: auto; padding-left: 13px; position: relative; }
.fold::before { content: ""; position: absolute; left: 0; height: 12px; border-left: 1px solid #c6ccd6; }

.pop { position: absolute; left: 464px; bottom: 0; width: 337px; height: 500px; background: #fff; border-radius: 4px 4px 0 0; box-shadow: 0 0 5px rgba(0, 0, 0, .25); padding: 19px 15px 0; z-index: 3; }
.frame { position: absolute; inset: 8px 2px 1px 0; border: 2px solid #e8484a; pointer-events: none; }
.row { display: flex; align-items: center; height: 22px; }
.name { width: 60px; white-space: nowrap; }
.opt { display: flex; align-items: center; gap: 5px; margin-right: 10px; white-space: nowrap; }
.opt input { appearance: none; width: 16px; height: 16px; border: 1px solid #b8bdc7; border-radius: 50%; }
.opt input:checked { border-color: #2b5fdc; background: radial-gradient(circle, #2b5fdc 4px, transparent 4px); }
.scheme { margin-top: 9px; }
.pick { display: flex; align-items: center; width: 170px; height: 22px; }
.pick select, .pick input { appearance: none; flex: 1; min-width: 0; }
.pick.line { border-bottom: 1px solid #dcdfe5; padding: 0 5px; }
.pick.box { border: 1px solid #e3e6ea; width: 169px; padding-left: 6px; gap: 9px; position: relative; }
.pick.box > svg:first-child { color: #4a556b; }
.pick.box .down { position: absolute; right: 4px; bottom: 3px; }
.ramp { display: grid; grid-template-columns: repeat(3, 1fr); width: 170px; height: 25px; margin: 2px 1px 9px auto; }
.count { margin-top: 9px; }
.ranges { border: 1px solid #e3e6ea; height: 181px; margin-top: 8px; padding: 9px; display: grid; gap: 11px; align-content: start; }
.range { display: grid; grid-template-columns: 24px 48px 28px 29px 29px 48px; align-items: center; height: 25px; }
.range > :nth-child(2) { margin-left: 6px; margin-right: -6px; }
.range > :nth-child(n+3) { margin-left: 6px; }
.range input { width: 48px; height: 25px; padding: 0 4px; border-bottom: 1px solid #dfe2e7; }
.range input:disabled { color: #c5c8ce; border-color: #edeef1; }
.swatch { width: 24px; height: 25px; border: 1px solid #dfe2e7; border-radius: 2px; padding: 2px; background-clip: content-box; position: relative; }
.swatch::after { content: ""; position: absolute; right: 1px; bottom: 3px; border: 2px solid transparent; border-top: 3px solid #14243f; border-bottom: 0; }
.op { color: #b9bdc5; position: relative; padding-left: 4px; }
.op.lt { padding-left: 9px; }
.op::after { content: ""; position: absolute; right: 0; bottom: -7px; border: 3px solid transparent; border-top: 4px solid #c6c9cf; border-bottom: 0; }
.op.lt::after { right: -3px; }
.active { position: relative; display: block; height: 25px; }
.active input { border-color: #3563d4; }
.caret { position: absolute; left: 23px; top: 6px; height: 13px; border-left: 1px solid #000; }
.nullc { margin-top: 14px; }
.opacity { border: solid #dcdfe5; border-width: 1px 0; margin: 15px 0 11px; height: 52px; text-align: center; }
.opacity output { display: block; padding-right: 25px; }
.opacity .row { text-align: left; margin-top: 3px; }
.opacity input { appearance: none; width: 163px; height: 12px; margin: 8px 0 0 3px; background: linear-gradient(#2b5fdc, #2b5fdc) center / 100% 6px no-repeat; border-radius: 6px; }
.opacity input::-webkit-slider-thumb { appearance: none; width: 12px; height: 12px; border: 2px solid #2b5fdc; border-radius: 50%; background: #fff; }
```
